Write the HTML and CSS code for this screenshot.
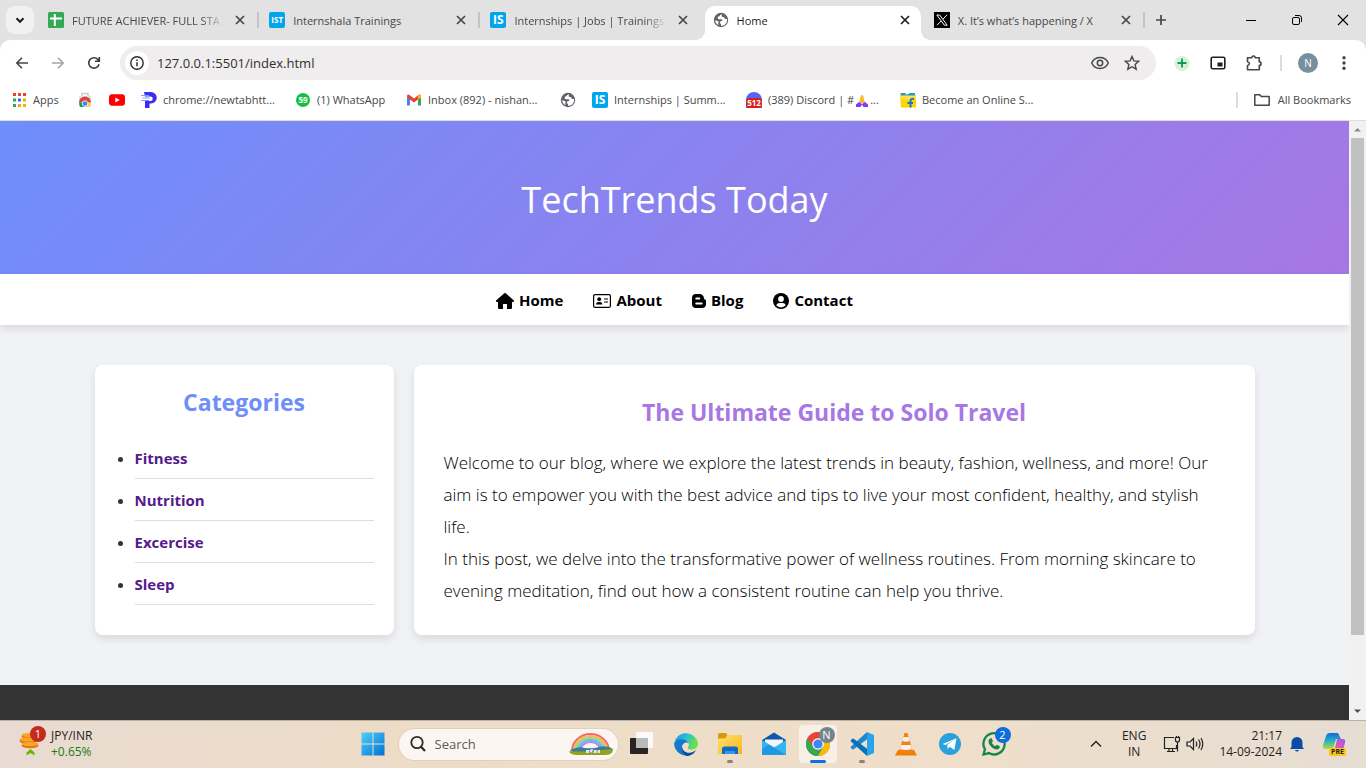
FILE: index.html
```html
<!DOCTYPE html>
<html lang="en">
<head>
<meta charset="utf-8">
<title>Home</title>
<link rel="stylesheet" href="styles.css">
</head>
<body>
<svg class="defs" aria-hidden="true">
  <defs>
    <symbol id="i-close" viewBox="0 0 16 16"><path d="M4 4l8 8M12 4l-8 8" stroke="currentColor" stroke-width="1.7" fill="none"/></symbol>
    <symbol id="i-globe" viewBox="0 0 16 16"><circle cx="8" cy="8" r="7.2" fill="#5f6368"/><path d="M9 2.200Q6.600 2.500 6.500 4.200 4.600 4 4.600 5.800q0 1.500 1.600 1.500h2.300q.8 0 .8.900 0 .8-.8.800-1.700 0-1.700 1.700.1 1 1.200 1v2q3.500.6 5.400-2.700 1-2 .7-4h-1.700q-.9 0-.9-.9 0-1-1.600-1-1.300 0-1.300-1.300Q9 3 9 2.200zM2 8.200q.3 3.400 3.300 5v-2.400q1-.7 0-1.500z" fill="#fff"/></symbol>
    <linearGradient id="g-win" x1="0" y1="0" x2="1" y2="1"><stop offset="0" stop-color="#4fd0fb"/><stop offset="1" stop-color="#0071d3"/></linearGradient>
    <linearGradient id="g-edge" x1="0" y1="0" x2="1" y2="0.300"><stop offset="0" stop-color="#1a8fe0"/><stop offset="0.500" stop-color="#27bdd8"/><stop offset="1" stop-color="#6ae04a"/></linearGradient>
    <linearGradient id="g-folder" x1="0" y1="0" x2="1" y2="1"><stop offset="0" stop-color="#ffdf71"/><stop offset="1" stop-color="#f7b718"/></linearGradient>
    <linearGradient id="g-cop1" x1="0" y1="0" x2="0" y2="1"><stop offset="0" stop-color="#1769d8"/><stop offset="0.500" stop-color="#22b5c8"/><stop offset="1" stop-color="#c4d92e"/></linearGradient>
    <linearGradient id="g-cop2" x1="1" y1="0" x2="0" y2="1"><stop offset="0" stop-color="#9b5cf6"/><stop offset="0.600" stop-color="#f0569c"/><stop offset="1" stop-color="#ff9a4d"/></linearGradient>
  </defs>
</svg>

<header class="tabstrip">
  <button class="tab-search" aria-label="Search tabs"><svg width="16" height="16" viewBox="0 0 16 16"><path d="M4.500 6.300L8 9.800l3.500-3.500" stroke="#1f1f1f" stroke-width="2" fill="none"/></svg></button>
  <div class="tabs">
    <div class="tab">
      <svg class="favicon" viewBox="0 0 16 16"><rect width="16" height="16" rx="1.500" fill="#34a853"/><path d="M2 6.500h12M6.800 2v12" stroke="#fff" stroke-width="2"/></svg>
      <button class="tab-title faded">FUTURE ACHIEVER- FULL STA</button>
      <button class="tab-close" aria-label="Close tab"><svg><use href="#i-close"/></svg></button>
    </div>
    <div class="tab">
      <span class="favicon tile small">IST</span>
      <button class="tab-title">Internshala Trainings</button>
      <button class="tab-close" aria-label="Close tab"><svg><use href="#i-close"/></svg></button>
    </div>
    <div class="tab before-active">
      <span class="favicon tile">IS</span>
      <button class="tab-title faded">Internships | Jobs | Trainings</button>
      <button class="tab-close" aria-label="Close tab"><svg><use href="#i-close"/></svg></button>
    </div>
    <div class="tab active">
      <svg class="favicon"><use href="#i-globe"/></svg>
      <button class="tab-title">Home</button>
      <button class="tab-close" aria-label="Close tab"><svg><use href="#i-close"/></svg></button>
    </div>
    <div class="tab">
      <svg class="favicon" viewBox="0 0 16 16"><rect width="16" height="16"/><path d="M2.800 3h2.800l7.600 10.200h-2.800zM13 2.800L9 7.200M7.200 9L3 13.200" stroke="#fff" stroke-width="1" fill="none"/></svg>
      <button class="tab-title">X. It’s what’s happening / X</button>
      <button class="tab-close" aria-label="Close tab"><svg><use href="#i-close"/></svg></button>
    </div>
  </div>
  <button class="new-tab" aria-label="New tab"><svg width="16" height="16" viewBox="0 0 16 16"><path d="M8 3v10M3 8h10" stroke="#474747" stroke-width="1.700"/></svg></button>
  <div class="window-controls">
    <button aria-label="Minimize"><svg width="12" height="12" viewBox="0 0 12 12"><path d="M1 6.500h10" stroke="#000"/></svg></button>
    <button aria-label="Restore"><svg width="12" height="12" viewBox="0 0 12 12"><rect x="1.500" y="3.500" width="7" height="7" rx="1.500" fill="none" stroke="#000"/><path d="M4 1.500h4q2.500 0 2.500 2.500v4" fill="none" stroke="#000"/></svg></button>
    <button aria-label="Close"><svg width="12" height="12" viewBox="0 0 12 12"><path d="M1 1l10 10M11 1L1 11" stroke="#000" stroke-width="1.100"/></svg></button>
  </div>
</header>

<div class="toolbar">
  <button class="tool" aria-label="Back"><svg width="16" height="16" viewBox="0 0 16 16"><path d="M14 8H3M8 2.800L2.800 8 8 13.200" stroke="#474747" stroke-width="1.600" fill="none"/></svg></button>
  <button class="tool" aria-label="Forward"><svg width="16" height="16" viewBox="0 0 16 16"><path d="M2 8h11M8 2.800L13.200 8 8 13.200" stroke="#a5a5a5" stroke-width="1.600" fill="none"/></svg></button>
  <button class="tool" aria-label="Reload"><svg width="16" height="16" viewBox="0 0 16 16"><path d="M13 9.200A5.200 5.200 0 1 1 11.800 4.400L13 5.600M13.300 2v4.300H9" stroke="#3c3c3c" stroke-width="1.600" fill="none"/></svg></button>
  <div class="omnibox">
    <button class="site-info" aria-label="View site information"><svg width="16" height="16" viewBox="0 0 16 16"><circle cx="8" cy="8" r="6.200" stroke="#2d2d2d" stroke-width="1.400" fill="none"/><path d="M8 7.200v4M8 4.600v1.500" stroke="#2d2d2d" stroke-width="1.500"/></svg></button>
    <input class="url" type="text" aria-label="Address" value="127.0.0.1:5501/index.html">
    <button class="omni-action" aria-label="Tracking protection"><svg width="20" height="20" viewBox="0 0 20 20"><path d="M1.700 10C3.400 6.300 6.500 4.500 10 4.500s6.600 1.800 8.300 5.500c-1.700 3.700-4.800 5.500-8.300 5.500S3.400 13.700 1.700 10z" stroke="#474747" stroke-width="1.500" fill="none"/><circle cx="10" cy="10" r="2.700" stroke="#474747" stroke-width="1.500" fill="none"/></svg></button>
    <button class="omni-action" aria-label="Bookmark this tab"><svg width="18" height="18" viewBox="0 0 18 18"><path d="M9 2.500l1.900 4.400 4.800.4-3.600 3.200 1.100 4.700L9 12.700l-4.200 2.500 1.100-4.700-3.600-3.200 4.800-.4z" stroke="#474747" stroke-width="1.400" fill="none"/></svg></button>
  </div>
  <button class="tool" aria-label="Extension"><svg width="16" height="16" viewBox="0 0 16 16"><circle cx="8" cy="8.500" r="7.500" fill="#d9f2d6"/><path d="M8 3.500v9M3.500 8h9" stroke="#0a9b5b" stroke-width="1.800"/></svg></button>
  <button class="tool" aria-label="Picture in picture"><svg width="16" height="16" viewBox="0 0 16 16"><rect x="1.200" y="2.200" width="13.600" height="11.600" rx="1.500" stroke="#1f1f1f" stroke-width="1.600" fill="none"/><rect x="7.500" y="7.500" width="5" height="4" fill="#1f1f1f"/></svg></button>
  <button class="tool" aria-label="Extensions"><svg width="18" height="18" viewBox="0 0 18 18"><path d="M2.500 3.700h4.300c0-2.300 3.400-2.300 3.400 0h4.100v4.200c2.400 0 2.400 3.500 0 3.500v4.300H2.500v-4.200c2.500-.3 2.500-3.500 0-3.700z" stroke="#474747" stroke-width="1.600" fill="none" stroke-linejoin="round"/></svg></button>
  <span class="rule spaced"></span>
  <button class="tool" aria-label="Profile"><span class="avatar">N</span></button>
  <button class="tool" aria-label="Menu"><svg width="16" height="16" viewBox="0 0 16 16" fill="#474747"><circle cx="8" cy="2.700" r="1.700"/><circle cx="8" cy="8" r="1.700"/><circle cx="8" cy="13.300" r="1.700"/></svg></button>
</div>

<nav class="bookmarks" aria-label="Bookmarks">
  <a class="bm bm-apps" href="#"><svg class="favicon" viewBox="0 0 16 16"><g fill="#ea4335"><path d="M2 1h3v3H2zM7 1h3v3H7zM12 1h3v3h-3z"/></g><path d="M2 6.500h3v3H2z" fill="#34a853"/><path d="M7 6.500h3v3H7z" fill="#1a73e8"/><path d="M12 6.500h3v3h-3zM7 12h3v3H7zM12 12h3v3h-3z" fill="#fbac04"/><path d="M2 12h3v3H2z" fill="#34a853"/></svg><span>Apps</span></a>
  <a class="bm bm-icon" href="#" aria-label="Web Store"><svg class="favicon" viewBox="0 0 16 16"><path d="M5 4V1.500h6V4" stroke="#ccc" stroke-width="1.500" fill="none"/><path d="M2 4h12v11H2z" fill="#e4e4e4"/><path d="M2 10.500a6 6 0 0 1 12 0z" fill="#db4437"/><path d="M2 10.500q0 2.500 1.500 4.500H8l-3-4.500z" fill="#0f9d58"/><path d="M14 10.500q0 2.500-1.500 4.500H8l3-4.500z" fill="#ffcd40"/><circle cx="8" cy="11.500" r="2.800" fill="#4285f4" stroke="#fff" stroke-width=".8"/></svg></a>
  <a class="bm bm-icon" href="#" aria-label="YouTube"><svg class="favicon" viewBox="0 0 16 16"><rect y="2.200" width="16" height="11.600" rx="3" fill="#f00"/><path d="M6.300 5.500v5L10.700 8z" fill="#fff"/></svg></a>
  <a class="bm" href="#"><svg class="favicon" viewBox="0 0 16 16"><path d="M3 0h7a5.500 5.500 0 0 1 0 11.500H8.500V16H4V9h5.500a2.200 2.200 0 0 0 0-4.500H4z" fill="#3b2df2"/><path d="M0 3.500h8M1.500 6h7M0 8.500h8" stroke="#6fa0ff" stroke-width="1.200"/></svg><span>chrome://newtabhtt...</span></a>
  <a class="bm bm-whatsapp" href="#"><span class="favicon chat">59</span><span>(1) WhatsApp</span></a>
  <a class="bm" href="#"><svg class="favicon" viewBox="0 0 16 16"><path d="M1 4v9.500h3V7z" fill="#4285f4"/><path d="M15 4v9.500h-3V7z" fill="#34a853"/><path d="M1 3.800q.5-2 2.500-.9L8 6.500l4.500-3.600q2-1.100 2.500.9v1.400L8 10.500 1 5.200z" fill="#ea4335"/><path d="M12 4l1-1.200q2-.6 2 1.200v1.500l-3 2z" fill="#fbbc04"/></svg><span>Inbox (892) - nishan...</span></a>
  <a class="bm bm-icon" href="#" aria-label="Site"><svg class="favicon"><use href="#i-globe"/></svg></a>
  <a class="bm" href="#"><span class="favicon tile">IS</span><span>Internships | Summ...</span></a>
  <a class="bm" href="#"><span class="favicon discord"><b>512</b></span><span>(389) Discord | #<svg class="emoji" viewBox="0 0 12 12"><path d="M6 0Q4.500 0 4.300 3L3 8h6L7.700 3Q7.500 0 6 0z" fill="#fdb62f"/><path d="M3 7L0 9.500V12h4.500L6 9.500 7.500 12H12V9.500L9 7 6 9z" fill="#7a3ff2"/></svg>...</span></a>
  <a class="bm" href="#"><svg class="favicon" viewBox="0 0 16 16"><path d="M0 1h6l1 2h9v12.500H1z" fill="#ffd500"/><path d="M1 1h4l1 2 4-2h5v3H1z" fill="#1c9bd8"/><path d="M0 3.500h16v3L9 8 0 6.500z" fill="#ffe34d"/><path d="M14 7q-3.500-.8-3.500 2v6.500M7.500 11h5.500" stroke="#1873d3" stroke-width="1.900" fill="none"/></svg><span>Become an Online S...</span></a>
  <span class="rule push"></span>
  <a class="all-bookmarks" href="#"><svg width="16" height="16" viewBox="0 0 16 16"><path d="M.8 13.200V2.800h5l1.500 1.700h7.900v8.700z" stroke="#474747" stroke-width="1.500" fill="none" stroke-linejoin="round"/></svg><span>All Bookmarks</span></a>
</nav>

<div class="viewport">
  <div class="page">
    <header class="hero"><h1>TechTrends Today</h1></header>
    <nav class="site-nav">
      <a href="#"><svg width="18" height="16" viewBox="0 0 576 512"><path d="M575.800 255.500c0 18-15 32.100-32 32.100h-32l.7 160.200c0 2.700-.2 5.400-.5 8.100V472c0 22.100-17.900 40-40 40H352V352H224v160H104c-22.100 0-40-17.900-40-40V287.600H32c-18 0-32-14-32-32.100 0-9 3-17 10-24L266.400 8c7-7 15-8 22-8s15 2 21 7l255.400 224.500c8 7 12 15 11 24z"/></svg> Home</a>
      <a href="#"><svg width="18" height="16" viewBox="0 0 18 16"><rect x=".6" y="1.600" width="16.800" height="12.800" rx="1.500" fill="none" stroke="#000" stroke-width="1.200"/><circle cx="6.200" cy="6.200" r="1.900"/><path d="M3 11.500q0-2.500 2.200-2.500h2q2.200 0 2.200 2.500z"/><path d="M11 6h4M11 9h4" stroke="#000" stroke-width="1.200"/></svg> About</a>
      <a href="#"><svg width="14" height="16" viewBox="0 0 14 16"><path fill-rule="evenodd" d="M4 1h3.500A4.500 4.500 0 0 1 12 5.500q.1 1 1.200 1.100.8.200.8 1.200V11a4 4 0 0 1-4 4H4a4 4 0 0 1-4-4V5a4 4 0 0 1 4-4zm.3 3.500a1 1 0 0 0 0 2h3a1 1 0 0 0 0-2zm0 5a1 1 0 0 0 0 2h5.400a1 1 0 0 0 0-2z"/></svg> Blog</a>
      <a href="#"><svg width="16" height="16" viewBox="0 0 16 16"><circle cx="8" cy="8" r="8"/><circle cx="8" cy="6" r="2.900" fill="#fff"/><path d="M3.200 12.300Q4 10 6.500 10h3q2.500 0 3.300 2.300a6.500 6.500 0 0 1-9.600 0z" fill="#fff"/></svg> Contact</a>
    </nav>
    <main class="container">
      <aside class="card sidebar">
        <h2>Categories</h2>
        <ul>
          <li><a href="#">Fitness</a></li>
          <li><a href="#">Nutrition</a></li>
          <li><a href="#">Excercise</a></li>
          <li><a href="#">Sleep</a></li>
        </ul>
      </aside>
      <article class="card post">
        <h2>The Ultimate Guide to Solo Travel</h2>
        <p>Welcome to our blog, where we explore the latest trends in beauty, fashion, wellness, and more! Our aim is to empower you with the best advice and tips to live your most confident, healthy, and stylish life.</p>
        <p>In this post, we delve into the transformative power of wellness routines. From morning skincare to evening meditation, find out how a consistent routine can help you thrive.</p>
      </article>
    </main>
    <footer class="site-footer"></footer>
  </div>
  <div class="scrollbar" aria-hidden="true">
    <svg width="17" height="17" viewBox="0 0 17 17"><path d="M5 10.500h7L8.500 7z" fill="#8a8a8a"/></svg>
    <div class="track"><div class="thumb"></div></div>
    <svg width="17" height="17" viewBox="0 0 17 17"><path d="M5 6.500h7L8.500 10z" fill="#505050"/></svg>
  </div>
</div>

<footer class="taskbar">
  <div class="task-left">
    <button class="widget">
      <span class="coins"><svg width="28" height="32" viewBox="0 0 28 32"><g fill="#e07a0c"><ellipse cx="11" cy="17.500" rx="8.500" ry="2.800"/><ellipse cx="9" cy="13" rx="8.500" ry="2.800"/><ellipse cx="11" cy="8.500" rx="8.500" ry="2.800"/></g><g fill="#fba42a"><ellipse cx="11" cy="16" rx="8.500" ry="2"/><ellipse cx="9" cy="11.500" rx="8.500" ry="2"/><ellipse cx="11" cy="7" rx="8.500" ry="2"/></g><path d="M7.500 27.500v-3l4-3.500 4 3.500v3l-4-2.500z" fill="#6bb700"/></svg><b class="badge red">1</b></span>
      <span class="quote"><span>JPY/INR</span><span class="up">+0.65%</span></span>
    </button>
  </div>
  <div class="task-center">
    <button class="app" aria-label="Start"><svg width="24" height="24" viewBox="0 0 24 24" fill="url(#g-win)"><path d="M.5.500h11v11H.5zM12.500.500h11v11h-11zM.5 12.500h11v11H.5zM12.500 12.500h11v11h-11z"/></svg></button>
    <label class="search">
      <svg width="18" height="18" viewBox="0 0 18 18"><circle cx="8" cy="7.500" r="5.700" stroke="#2b2b2b" stroke-width="1.800" fill="none"/><path d="M12 11.800l4 4.200" stroke="#2b2b2b" stroke-width="2.200"/></svg>
      <input type="search" placeholder="Search" aria-label="Search">
      <svg width="46" height="24" viewBox="0 0 46 24"><g fill="none" stroke-width="2"><path d="M4 19a18.500 17 0 0 1 37 0" stroke="#f4696b"/><path d="M6 19a16.500 15 0 0 1 33 0" stroke="#fbb357"/><path d="M8 19a14.500 13 0 0 1 29 0" stroke="#8fdc7c"/><path d="M10 19a12.500 11 0 0 1 25 0" stroke="#6bb4f5"/><path d="M12 19a10.500 9 0 0 1 21 0" stroke="#a884f0"/></g><path d="M2 18q8-4 15-2 8 1 14-1 8-2 14 2l-3 4H6z" fill="#3d7c96"/><path d="M1 19q10 1 22 0t22-2q0 6-8 6H9q-7 0-8-4z" fill="#8ea61e"/><path d="M18 19.500h4l2-1 3 1h5" stroke="#eadcff" stroke-width="3" stroke-dasharray="3 1"/></svg>
    </label>
    <button class="app" aria-label="Task view"><svg width="24" height="24" viewBox="0 0 24 24"><rect y="6" width="18" height="16" rx="1" fill="#262626"/><rect x="6" width="17" height="16" rx="1" fill="#fafafa"/><path d="M6 6h12v10H6z" fill="#bababa"/></svg></button>
    <button class="app" aria-label="Edge"><svg width="24" height="24" viewBox="0 0 24 24"><path d="M.3 11A12 12 0 0 1 24 11.500c0 4-3 6-6.500 6-2.700 0-4.500-1-3.500-2.300 2.400-3.300-.5-7.200-5-7.200C4.500 8 1 10 .3 11z" fill="url(#g-edge)"/><path d="M.2 11C1.500 8.500 4.800 6.800 8.500 7.200c3 .3 5 2 5.800 4-2-1.600-6.300-.2-6.300 4 0 4.800 5 8.800 10 6.700A12 12 0 0 1 .2 11z" fill="#1379cf"/><path d="M8 14.500c0 4 4 6.700 8 6.200 3-.4 5-1.700 6.200-3C20.500 21.500 17 24 12.500 24 9 22 7 18 8 14.500z" fill="#0c4fa0"/></svg></button>
    <button class="app running" aria-label="File Explorer"><svg width="24" height="24" viewBox="0 0 24 24"><path d="M0 3q0-2 2-2h6l2 3v5H0z" fill="#d79a0c"/><path d="M0 6.500h7L9.500 3H24v19H0z" fill="url(#g-folder)"/><path d="M4 22v-5q0-2.500 2.500-2.500h11Q20 14.500 20 17v5z" fill="#0e6cc4"/><path d="M7 19h10v3H7z" fill="#2f98ea"/></svg></button>
    <button class="app" aria-label="Mail"><svg width="24" height="24" viewBox="0 0 24 24"><path d="M0 8l12-7.500L24 8v5H0z" fill="#0d57ae"/><path d="M3 7.500h18v7H3z" fill="#f3f5f8"/><path d="M0 8l12 7.500L24 8v15H0z" fill="#34b4f1"/><path d="M0 23h24L7 12.500 0 17z" fill="#198be0" opacity=".7"/></svg></button>
    <button class="app current" aria-label="Chrome"><svg width="24" height="24" viewBox="0 0 24 24"><circle cx="12" cy="12" r="12" fill="#ea4335"/><path d="M1.600 6A12 12 0 0 0 12 24l5.200-9z" fill="#34a853"/><path d="M22.400 6A12 12 0 0 1 12 24l5.200-9L12 6z" fill="#fbbc04"/><path d="M1.600 6l5.200 9L12 6h10.400a12 12 0 0 0-20.800 0z" fill="#ea4335"/><circle cx="12" cy="12" r="5.800" fill="#fff"/><circle cx="12" cy="12" r="4.600" fill="#4285f4"/></svg><b class="badge grey">N</b></button>
    <button class="app running" aria-label="Visual Studio Code"><svg width="24" height="24" viewBox="0 0 24 24"><path d="M17 0L1 14.500q-.8.800 0 1.600l1.300 1.200q.6.500 1.400 0L18 6.500z" fill="#1b87cd"/><path d="M17 24L1 9.500q-.8-.8 0-1.600l1.300-1.200q.6-.5 1.400 0L18 17.500z" fill="#0b6fb8"/><path d="M17 0l7 3v18l-7 3z" fill="#29a3ec"/></svg></button>
    <button class="app" aria-label="VLC"><svg width="24" height="24" viewBox="0 0 24 24"><path d="M4 18h16l3 5.500H1z" fill="#f07d00"/><path d="M10.500 1h3L19 20q-7 2.500-14 0z" fill="#f58211"/><path d="M9.400 5h5.200l1.100 4q-3.700 1.500-7.400 0zM7.200 13h9.600l1.200 4q-6 2-12 0z" fill="#f4f1ee"/></svg></button>
    <button class="app" aria-label="Telegram"><svg width="24" height="24" viewBox="0 0 24 24"><circle cx="12" cy="12" r="11" fill="#2aa1dc"/><path d="M4.500 12L18.500 6.300 16.300 18l-4.500-3.300-2.100 2.200-.5-4 6-4.700L7.500 13z" fill="#fff"/></svg></button>
    <button class="app" aria-label="WhatsApp"><svg width="26" height="26" viewBox="0 0 26 26"><path d="M2.500 23.500l1.400-5.300a10.600 10.600 0 1 1 4 3.900z" stroke="#14854d" stroke-width="2.300" fill="none"/><path d="M9 7.500l1.700-.2 1.300 3-1.200 1.500q1.200 2.400 3.500 3.500l1.500-1.500 3 1.500q0 3-3 3.200C11.500 18 7.500 14 7.500 10q.2-1.800 1.500-2.500z" fill="#14854d"/></svg><b class="badge blue">2</b></button>
  </div>
  <div class="task-right">
    <button class="tray" aria-label="Show hidden icons"><svg width="12" height="12" viewBox="0 0 12 12"><path d="M1 8.500l5-5 5 5" stroke="#222" stroke-width="1.400" fill="none"/></svg></button>
    <button class="tray lang"><span>ENG</span><span>IN</span></button>
    <button class="tray net" aria-label="Network and volume">
      <svg width="18" height="18" viewBox="0 0 18 18" fill="none" stroke="#222" stroke-width="1.200"><path d="M11 2.500H1.500v11h12V10M4 16.500h8M6 14v2.500M9.500 14v2.500M12.500 2.500h4V5q0 2-2 2t-2-2zM14.500 7v9.500M13.500 1v1.500M15.500 1v1.500"/></svg>
      <svg width="18" height="16" viewBox="0 0 18 16" fill="none" stroke="#222" stroke-width="1.200"><path d="M1 6h3l3.500-3.500v11L4 10H1zM10 5.500q1.500 2.500 0 5M12.500 3.500q3 4.500 0 9M15 2q3.500 6 0 12"/></svg>
    </button>
    <button class="tray clock"><span>21:17</span><span>14-09-2024</span></button>
    <button class="tray bell" aria-label="Notifications"><svg width="14" height="16" viewBox="0 0 14 16" fill="#0a4ba8"><path d="M1.500 11V6.500a5.500 5.500 0 0 1 11 0V11l1.500 2H0zM4.800 14h4.400q-2.200 3-4.400 0z"/></svg></button>
    <button class="tray copilot" aria-label="Copilot"><svg width="24" height="24" viewBox="0 0 24 24"><path d="M8 1h8l3 6h-5L11 17H3Q0 17 1 13L4 4q1-3 4-3z" fill="url(#g-cop1)"/><path d="M15 7h6q3 0 2 4l-2 7q-1 4-5 4H8l3-5q2 0 2.500-3z" fill="url(#g-cop2)"/></svg><b class="pre">PRE</b></button>
  </div>
</footer>
</body>
</html>
```
FILE: styles.css
```css
* { box-sizing: border-box; }

body {
  margin: 0;
  height: 100vh;
  display: flex;
  flex-direction: column;
  overflow: hidden;
  background: #e2e2e2;
  color: #333;
  font: 12px/16px "Open Sans", "Noto Sans", sans-serif;
}

button, input {
  border: 0;
  padding: 0;
  margin: 0;
  background: none;
  font: inherit;
  color: inherit;
}

a { color: inherit; text-decoration: none; }
svg { flex: none; }
.defs { position: absolute; width: 0; height: 0; }

/* Tab strip */
.tabstrip {
  display: flex;
  align-items: center;
  height: 40px;
  flex: none;
  padding-left: 6px;
}

.tab-search {
  width: 28px;
  height: 28px;
  margin-right: 4px;
  border-radius: 9px;
  background: #f1f1f1;
  display: grid;
  place-items: center;
}

.tabs { display: flex; flex: 0 1 1107px; align-self: stretch; }

.tab {
  flex: 1 1 0;
  min-width: 0;
  display: flex;
  align-items: center;
  padding: 0 11px 0 10px;
  position: relative;
  font-size: 11px;
  color: #474747;
}

.tab::after {
  content: "";
  position: absolute;
  right: 0;
  top: 12px;
  width: 2px;
  height: 16px;
  background: #c4c4c4;
}

.tab.before-active::after { display: none; }

.tab.active {
  margin: 6px 3px 0 3px;
  padding: 0 8px 6px 8px;
  background: #fff;
  color: #1f1f1f;
  border-radius: 10px 10px 0 0;
}

.tab.active::before, .tab.active::after {
  content: "";
  position: absolute;
  top: auto;
  bottom: 0;
  width: 10px;
  height: 10px;
}

.tab.active::before { left: -10px; background: radial-gradient(circle at 0 0, transparent 10px, #fff 10px); }
.tab.active::after { right: -10px; background: radial-gradient(circle at 100% 0, transparent 10px, #fff 10px); }

.favicon { width: 16px; height: 16px; flex: none; }

.tile {
  display: grid;
  place-items: center;
  border-radius: 2px;
  background: #00a5ec;
  color: #fff;
  font: 700 12px/16px "Open Sans", sans-serif;
}

.tile.small { font-size: 8px; }

.tab-title {
  flex: 1;
  min-width: 0;
  margin: 0 8px;
  padding-top: 2px;
  overflow: hidden;
  white-space: nowrap;
  text-align: left;
}

.faded {
  -webkit-mask-image: linear-gradient(90deg, #000 85%, transparent);
  mask-image: linear-gradient(90deg, #000 85%, transparent);
}

.tab-close { width: 16px; height: 16px; }
.tab-close svg { width: 16px; height: 16px; display: block; }
.new-tab { width: 32px; height: 32px; display: grid; place-items: center; }
.window-controls { display: flex; margin-left: auto; }
.window-controls button { width: 46px; height: 40px; display: grid; place-items: center; }

/* Toolbar */
.toolbar {
  display: flex;
  align-items: center;
  flex: none;
  height: 46px;
  padding: 0 4px;
  border-radius: 10px 10px 0 0;
  background: #fff;
}

.tool { width: 36px; height: 36px; display: grid; place-items: center; }

.omnibox {
  flex: 1;
  display: flex;
  align-items: center;
  height: 34px;
  margin: 0 8px;
  padding: 0 8px 0 5px;
  border-radius: 17px;
  background: #efedee;
}

.site-info {
  width: 24px;
  height: 24px;
  border-radius: 50%;
  background: #fff;
  display: grid;
  place-items: center;
}

.url { flex: 1; min-width: 0; margin-left: 8px; font-size: 13px; color: #2f2f2f; }
.omni-action { width: 32px; height: 32px; display: grid; place-items: center; }
.rule { width: 2px; height: 16px; background: #dcdcdc; }
.spaced { margin: 0 8px; }

.avatar {
  width: 20px;
  height: 20px;
  border-radius: 50%;
  background: #78909c;
  color: #fff;
  font-size: 10px;
  line-height: 20px;
}

/* Bookmarks */
.bookmarks {
  display: flex;
  align-items: center;
  flex: none;
  height: 35px;
  padding: 0 15px 6px 11px;
  border-bottom: 1px solid #dedede;
  background: #fff;
  color: #474747;
  font-size: 11px;
}

.bm {
  display: flex;
  align-items: center;
  gap: 6px;
  width: 154px;
  white-space: nowrap;
}

.bm-apps { width: 66px; }
.bm-icon { width: 32px; }
.bm-whatsapp { width: 111px; }

.chat {
  width: 14px;
  height: 14px;
  margin: 0 1px;
  border-radius: 50%;
  background: #12c143;
  color: #fff;
  font: 700 8px/14px "Open Sans", sans-serif;
  text-align: center;
}

.discord {
  display: flex;
  align-items: flex-end;
  border-radius: 8px 8px 0 0;
  background: #5865f2;
}

.discord b {
  flex: 1;
  background: #d81e1e;
  border-radius: 3px;
  color: #fff;
  font: 700 8px/10px "Open Sans", sans-serif;
  text-align: center;
}

.emoji { width: 12px; height: 12px; vertical-align: middle; margin: 0 2px; }
.push { margin-left: auto; }
.all-bookmarks { display: flex; align-items: center; gap: 8px; margin-left: 16px; }

/* Page viewport */
.viewport { flex: 1; min-height: 0; display: flex; }

.page {
  flex: 1;
  min-width: 0;
  display: flex;
  flex-direction: column;
  overflow: hidden;
  background: #f0f2f5;
  font-size: 16px;
}

.hero {
  padding: 50px 20px 46px;
  background: linear-gradient(135deg, #6e8efb, #a777e3);
  color: #fff;
  text-align: center;
}

.hero h1 { margin: 0; font-size: 36px; line-height: 57px; font-weight: 400; }

.site-nav {
  display: flex;
  justify-content: center;
  gap: 30px;
  padding: 16px 15px 14px;
  background: #fff;
  box-shadow: 0 4px 8px rgba(0, 0, 0, 0.1);
  color: #000;
  font-size: 15px;
  line-height: 21px;
  font-weight: 700;
}

.site-nav a { display: flex; align-items: center; gap: 5px; }

.container {
  display: grid;
  grid-template-columns: 299px 1fr;
  gap: 20px;
  width: 100%;
  max-width: 1200px;
  margin: 20px auto 30px;
  padding: 20px;
}

.card {
  border-radius: 8px;
  background: #fff;
  box-shadow: 0 4px 8px rgba(0, 0, 0, 0.1);
}

.card h2 { margin: 0; font-size: 23px; line-height: 34px; font-weight: 700; text-align: center; }
.sidebar { padding: 20px; }
.sidebar h2 { color: #6e8efb; }
.sidebar ul { margin: 18px 0 10px; padding-left: 20px; }

.sidebar li {
  padding: 11px 0 9px;
  border-bottom: 1px solid #ddd;
  font-size: 15px;
  line-height: 21px;
}

.sidebar a { color: #551a8b; font-weight: 700; }
.post { padding: 30px 30px 27px; }
.post h2 { color: #a777e3; margin-bottom: 18px; }
.post p { margin: 0; font-size: 17px; line-height: 32px; font-weight: 300; color: #000; }
.site-footer { flex: 1; background: #333; }

.scrollbar { width: 17px; display: flex; flex-direction: column; background: #f1f1f1; }
.track { flex: 1; padding: 0 2px; }
.thumb { height: 88%; background: #c1c1c1; }

/* Taskbar */
.taskbar {
  display: flex;
  flex: none;
  height: 48px;
  box-shadow: inset 0 1px #b9b0a6;
  background: linear-gradient(90deg, #e9dbd2, #eddcc6 30%, #efdfca 70%, #e6ddd3);
  color: #1f1f1f;
  font-size: 12px;
}

.task-left, .task-right { flex: 1 1 0; display: flex; align-items: center; }
.task-right { justify-content: flex-end; }
.widget { display: flex; align-items: center; gap: 4px; margin-left: 19px; font-size: 12px; }
.coins { position: relative; display: flex; }
.quote { display: flex; flex-direction: column; text-align: left; }
.up { color: #138013; }

.badge {
  position: absolute;
  width: 16px;
  height: 16px;
  border-radius: 50%;
  color: #fff;
  font-size: 11px;
  line-height: 16px;
  font-weight: 400;
  text-align: center;
}

.red { top: -2px; right: 1px; background: #c42b1c; }
.grey { top: 7px; right: 5px; background: #74858e; }
.blue { top: 7px; right: 5px; background: #0a6fd8; }

.task-center { display: flex; align-items: center; }

.app {
  position: relative;
  width: 44px;
  height: 48px;
  display: grid;
  place-items: center;
}

.app svg { z-index: 1; }
.badge { z-index: 2; }

.running::after, .current::after {
  content: "";
  position: absolute;
  bottom: 5px;
  left: 19px;
  width: 6px;
  height: 3px;
  border-radius: 2px;
  background: #8c8279;
}

.current::after { left: 14px; width: 16px; background: #0a72d8; }

.current::before {
  content: "";
  position: absolute;
  inset: 5px 3px;
  border-radius: 4px;
  background: #f8f0e6;
}

.search {
  display: flex;
  align-items: center;
  width: 219px;
  height: 31px;
  margin: 0 2px 0 4px;
  padding: 0 4px 0 10px;
  border-radius: 16px;
  background: #fbf6f1;
  box-shadow: 0 0 0 1px #e0d0bf;
}

.search input { flex: 1; min-width: 0; margin-left: 8px; font-size: 13px; }
.search input::placeholder { color: #5c5a57; opacity: 1; }

.tray { display: flex; align-items: center; justify-content: center; }
.lang, .clock { flex-direction: column; }
.lang { margin-left: 20px; }
.net { gap: 5px; margin-left: 17px; }
.clock { align-items: flex-end; margin-left: 15px; }
.bell { margin-left: 8px; }
.copilot { position: relative; margin: 0 20px 0 18px; }

.pre {
  position: absolute;
  right: 0;
  bottom: 0;
  padding: 0 2px;
  border-radius: 2px;
  background: #ffc61a;
  color: #222;
  font-size: 7px;
  line-height: 8px;
}
```
